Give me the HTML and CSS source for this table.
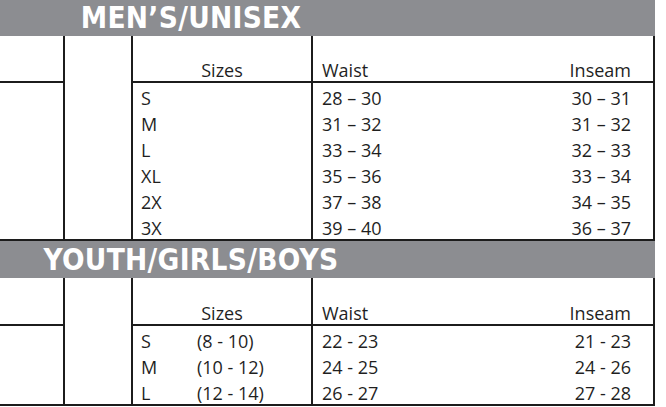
FILE: index.html
```html
<!DOCTYPE html>
<html>
<head>
<meta charset="utf-8">
<link rel="stylesheet" href="styles.css">
</head>
<body>
<div class="chart">
  <div class="band"><div class="band-title">MEN’S/UNISEX</div></div>
  <div class="grid men">
    <div class="c1-head"></div>
    <div class="c1-body"></div>
    <div class="c2"></div>
    <div class="c3 head"><span class="center">Sizes</span></div>
    <div class="c4 head"><span>Waist</span><span>Inseam</span></div>
    <div class="c3">S</div><div class="c4"><span>28 – 30</span><span>30 – 31</span></div>
    <div class="c3">M</div><div class="c4"><span>31 – 32</span><span>31 – 32</span></div>
    <div class="c3">L</div><div class="c4"><span>33 – 34</span><span>32 – 33</span></div>
    <div class="c3">XL</div><div class="c4"><span>35 – 36</span><span>33 – 34</span></div>
    <div class="c3">2X</div><div class="c4"><span>37 – 38</span><span>34 – 35</span></div>
    <div class="c3">3X</div><div class="c4"><span>39 – 40</span><span>36 – 37</span></div>
  </div>
  <div class="band band2"><div class="band-title">YOUTH/GIRLS/BOYS</div></div>
  <div class="grid youth">
    <div class="c1-head"></div>
    <div class="c1-body"></div>
    <div class="c2"></div>
    <div class="c3 head"><span class="center">Sizes</span></div>
    <div class="c4 head"><span>Waist</span><span>Inseam</span></div>
    <div class="c3"><span class="sz">S</span><span>(8 - 10)</span></div><div class="c4"><span>22 - 23</span><span>21 - 23</span></div>
    <div class="c3"><span class="sz">M</span><span>(10 - 12)</span></div><div class="c4"><span>24 - 25</span><span>24 - 26</span></div>
    <div class="c3"><span class="sz">L</span><span>(12 - 14)</span></div><div class="c4"><span>26 - 27</span><span>27 - 28</span></div>
  </div>
</div>
</body>
</html>
```
FILE: styles.css
```css
html, body {
  margin: 0;
  padding: 0;
  background: #ffffff;
}
body {
  font-family: "Open Sans", "Liberation Sans", sans-serif;
  color: #1f1f1f;
}
.chart {
  width: 655px;
}
.band {
  height: 36px;
  background: #8c8d91;
  display: flex;
  align-items: center;
}
.band2 {
  height: 37px;
}
.band-title {
  width: 382px;
  text-align: center;
  color: #ffffff;
  font-family: "DejaVu Sans Condensed", "DejaVu Sans", sans-serif;
  font-stretch: condensed;
  font-weight: bold;
  font-size: 29.5px;
  line-height: 36px;
  letter-spacing: 0.3px;
}
.grid {
  display: grid;
  grid-template-columns: 63px 68px 180px 342px;
  border-right: 2px solid #1c1c1c;
  border-bottom: 2px solid #1c1c1c;
  font-size: 18px;
}
.men {
  grid-template-rows: 47px repeat(6, 26px);
}
.youth {
  grid-template-rows: 48px repeat(3, 26px);
}
.c1-head {
  grid-column: 1;
  grid-row: 1;
  border-bottom: 2px solid #1c1c1c;
}
.c1-body {
  grid-column: 1;
  grid-row: 2 / -1;
}
.c2 {
  grid-column: 2;
  grid-row: 1 / -1;
  border-left: 2px solid #1c1c1c;
}
.c3, .c4 {
  border-left: 2px solid #1c1c1c;
  box-sizing: border-box;
  padding-top: 4px;
  line-height: 22px;
  white-space: nowrap;
}
.c3 {
  grid-column: 3;
  padding-left: 8px;
  display: flex;
}
.c4 {
  grid-column: 4;
  display: flex;
  justify-content: space-between;
  padding-left: 9px;
  padding-right: 22px;
}
.head {
  border-bottom: 2px solid #1c1c1c;
  align-items: flex-end;
  padding-top: 0;
  padding-bottom: 1px;
  line-height: 20px;
}
.c3.head {
  justify-content: center;
  padding-left: 0;
}
.sz {
  width: 56px;
}
```
